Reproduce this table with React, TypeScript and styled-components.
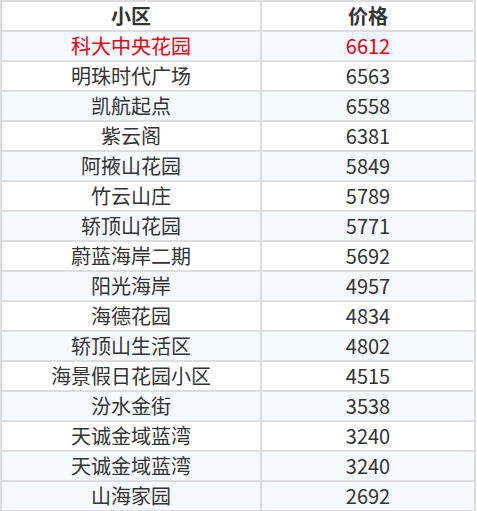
import React from "react";
import styled, { createGlobalStyle } from "styled-components";

const GlobalStyle = createGlobalStyle`
  body {
    margin: 0;
    background: #ffffff;
    font-family: "Noto Sans CJK SC", "Noto Sans", sans-serif;
  }
`;

const Table = styled.table`
  width: 476px;
  border-collapse: collapse;
  border: 2px solid #dddddd;
  font-size: 20px;
  color: #333333;
`;

const HeadCell = styled.th`
  height: 28px;
  padding: 0;
  border: 2px solid #dddddd;
  font-weight: bold;
  text-align: center;
  line-height: 26px;
  &:first-child {
    width: 258px;
  }
`;

const Row = styled.tr<{ $shade: boolean }>`
  background: ${(p) => (p.$shade ? "#f6f9fd" : "#ffffff")};
`;

const Cell = styled.td<{ $hot?: boolean }>`
  height: 28px;
  padding: 0;
  border: 2px solid #dddddd;
  text-align: center;
  line-height: 26px;
  color: ${(p) => (p.$hot ? "#e60012" : "#333333")};
`;

type Estate = {
  name: string;
  price: number;
};

const estates: Estate[] = [
  { name: "科大中央花园", price: 6612 },
  { name: "明珠时代广场", price: 6563 },
  { name: "凯航起点", price: 6558 },
  { name: "紫云阁", price: 6381 },
  { name: "阿掖山花园", price: 5849 },
  { name: "竹云山庄", price: 5789 },
  { name: "轿顶山花园", price: 5771 },
  { name: "蔚蓝海岸二期", price: 5692 },
  { name: "阳光海岸", price: 4957 },
  { name: "海德花园", price: 4834 },
  { name: "轿顶山生活区", price: 4802 },
  { name: "海景假日花园小区", price: 4515 },
  { name: "汾水金街", price: 3538 },
  { name: "天诚金域蓝湾", price: 3240 },
  { name: "天诚金域蓝湾", price: 3240 },
  { name: "山海家园", price: 2692 },
];

export default function App() {
  return (
    <>
      <GlobalStyle />
      <Table>
        <thead>
          <tr>
            <HeadCell>小区</HeadCell>
            <HeadCell>价格</HeadCell>
          </tr>
        </thead>
        <tbody>
          {estates.map((e, i) => (
            <Row key={i} $shade={i % 2 === 0 || i === estates.length - 1}>
              <Cell $hot={i === 0}>{e.name}</Cell>
              <Cell $hot={i === 0}>{e.price}</Cell>
            </Row>
          ))}
        </tbody>
      </Table>
    </>
  );
}
